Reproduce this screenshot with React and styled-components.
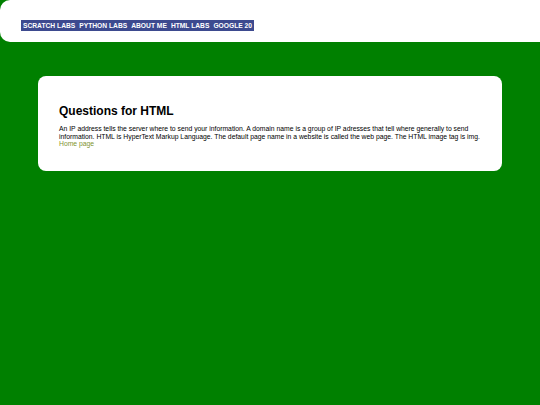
import React from 'react';
import styled, { createGlobalStyle } from 'styled-components';

const GlobalStyle = createGlobalStyle`
  html, body {
    margin: 0;
    padding: 0;
    background: #008000;
    font-family: "Liberation Sans", Arial, sans-serif;
  }
`;

const Header = styled.header`
  display: flex;
  align-items: flex-start;
  height: 42px;
  background: #ffffff;
  border-radius: 10px 0 0 10px;
  padding: 20px 0 0 21px;
  box-sizing: border-box;
`;

const Nav = styled.nav`
  display: flex;
  gap: 4px;
  padding: 0 2px;
  background: #3d4a8f;
  height: 11px;
  align-items: center;
`;

const NavLink = styled.a`
  color: #ffffff;
  font-size: 6.7px;
  font-weight: bold;
  text-decoration: none;
  white-space: nowrap;
`;

const Card = styled.section`
  margin: 34px 38px 0;
  background: #ffffff;
  border-radius: 8px;
  padding: 28px 21px 23px;
`;

const Title = styled.h1`
  margin: 0 0 7px;
  font-size: 12px;
  font-weight: bold;
  color: #000000;
`;

const Text = styled.p`
  margin: 0;
  font-size: 6.8px;
  line-height: 7.6px;
  color: #000000;
`;

const HomeLink = styled.a`
  color: #7f9430;
  text-decoration: none;
`;

const links = ['SCRATCH LABS', 'PYTHON LABS', 'ABOUT ME', 'HTML LABS', 'GOOGLE 20'];

const App = () => {
  return (
    <>
      <GlobalStyle />
      <Header>
        <Nav>
          {links.map((l) => (
            <NavLink key={l} href="#">{l}</NavLink>
          ))}
        </Nav>
      </Header>
      <Card>
        <Title>Questions for HTML</Title>
        <Text>
          An IP address tells the server where to send your information. A domain name is a group of IP adresses that tell where generally to send information. HTML is HyperText Markup Language. The default page name in a website is called the web page. The HTML image tag is img.
          <br />
          <HomeLink href="#">Home page</HomeLink>
        </Text>
      </Card>
    </>
  );
};

export default App;
